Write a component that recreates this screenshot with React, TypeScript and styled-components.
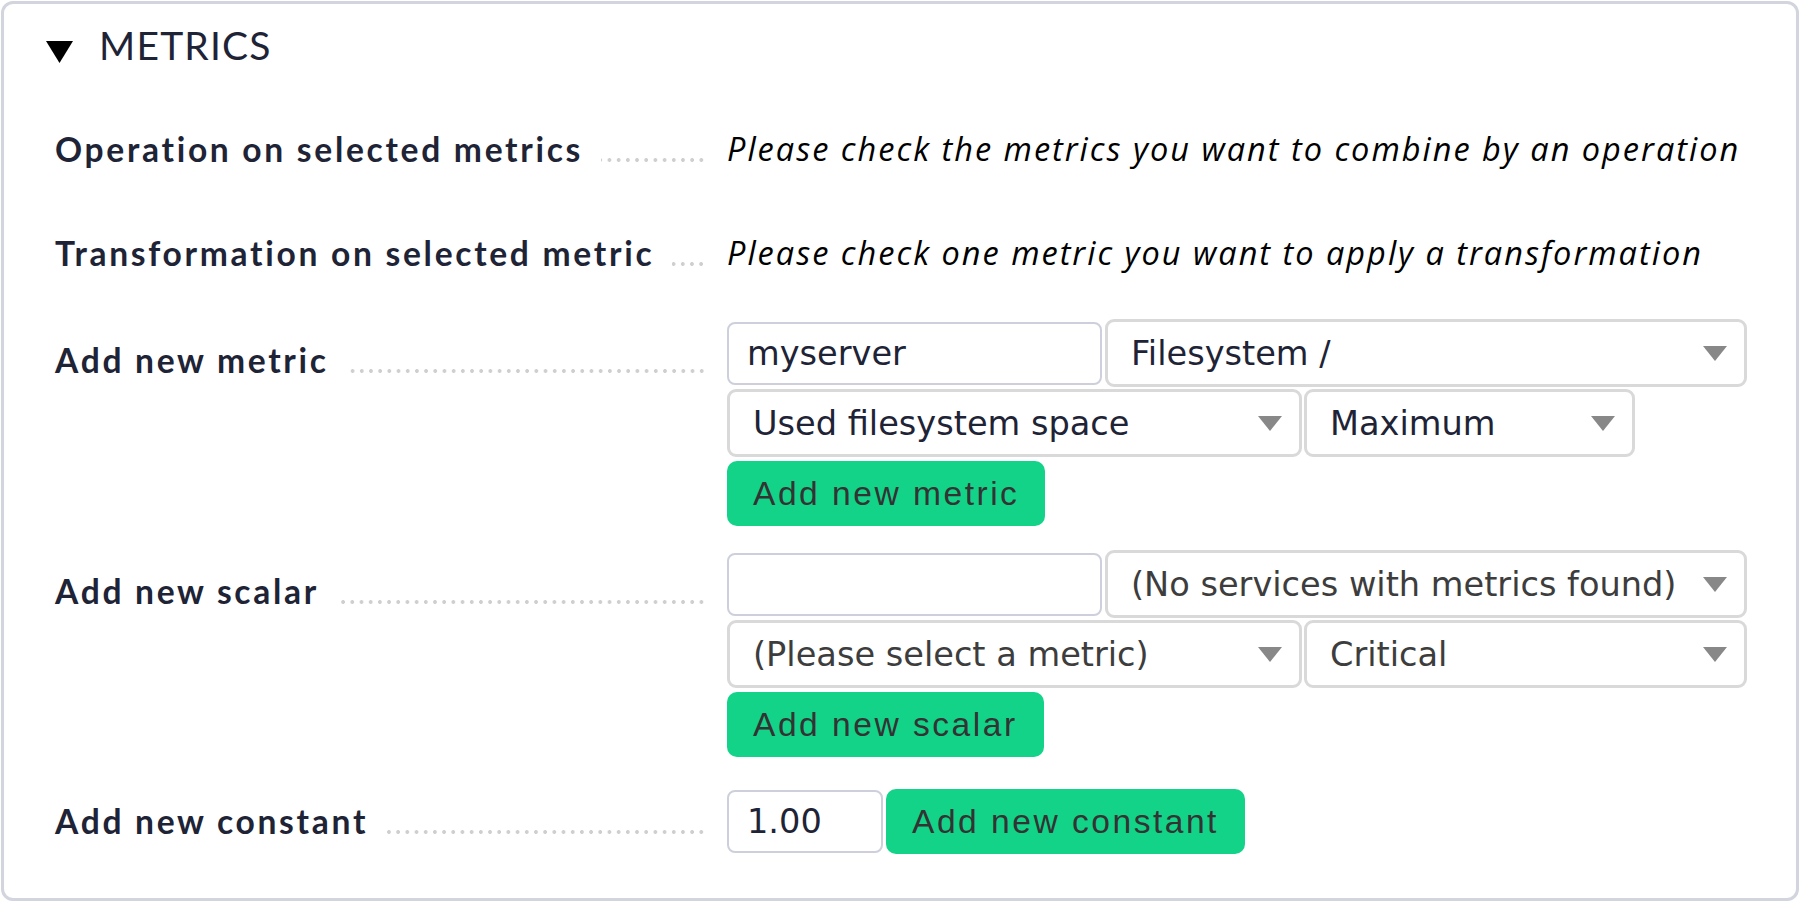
import React from 'react';
import styled, { createGlobalStyle } from 'styled-components';

const GlobalStyle = createGlobalStyle`
  body {
    margin: 0;
    background: #fff;
    font-family: Lato, "Liberation Sans", sans-serif;
  }
`;

const Frame = styled.section`
  box-sizing: border-box;
  margin: 1px;
  height: 900px;
  border: 3px solid #d2d4de;
  border-radius: 12px;
  background: #fff;
`;

const Header = styled.div`
  display: flex;
  align-items: center;
  padding: 18px 0 0 42px;
`;

const Toggle = styled.svg`
  width: 27px;
  height: 22px;
  flex-shrink: 0;
  margin: 14px 26px 0 0;
`;

const Title = styled.h2`
  margin: 0;
  font: 400 39px/1.2 Lato, sans-serif;
  letter-spacing: 1.2px;
  color: #1e2436;
`;

const Body = styled.div`
  padding-left: 51px;
`;

const Row = styled.div<{ $gap: number }>`
  display: grid;
  grid-template-columns: 651px 1fr;
  column-gap: 21px;
  margin-top: ${(p) => p.$gap}px;
`;

const Label = styled.div<{ $pad?: number }>`
  display: flex;
  align-items: baseline;
  padding-top: ${(p) => p.$pad ?? 0}px;
  font: 700 33.6px/1.2 Lato, sans-serif;
  letter-spacing: 2.7px;
  color: #1e2436;
  white-space: nowrap;
`;

const Leader = styled.span`
  flex: 1;
  height: 4px;
  margin-left: 18px;
  background-image: radial-gradient(circle, #cfcfcf 1.6px, transparent 2.2px);
  background-size: 9.2px 4px;
  background-repeat: repeat-x;
  background-position: right center;
`;

const Hint = styled.div`
  padding-top: 1px;
  font: italic 400 32.5px/38px "Open Sans", sans-serif;
  letter-spacing: 2px;
  color: #000;
  white-space: nowrap;
`;

const Stack = styled.div`
  display: flex;
  flex-direction: column;
  align-items: flex-start;
  gap: 2px;
`;

const Line = styled.div`
  display: flex;
  align-items: center;
  gap: 2px;
`;

const TextInput = styled.input<{ $width: number }>`
  box-sizing: border-box;
  width: ${(p) => p.$width}px;
  height: 63px;
  margin-right: 1px;
  padding: 0 18px;
  border: 2px solid #cdd0dc;
  border-radius: 8px;
  outline: none;
  background: #fff;
  font: 400 33.6px "DejaVu Sans", sans-serif;
  color: #1e2436;
`;

const Select = styled.div<{ $width: number; $muted?: boolean }>`
  box-sizing: border-box;
  width: ${(p) => p.$width}px;
  height: 68px;
  display: flex;
  align-items: center;
  justify-content: space-between;
  padding: 0 17px 0 23px;
  border: 3px solid #d9d9d9;
  border-radius: 9px;
  background: #fff;
  font: 400 33.6px "DejaVu Sans", sans-serif;
  color: ${(p) => (p.$muted ? '#3d3d3d' : '#1e2436')};
  white-space: nowrap;
`;

const Caret = styled.svg`
  width: 24px;
  height: 15px;
  flex-shrink: 0;
  margin-left: 10px;
`;

const Button = styled.button<{ $lift?: number }>`
  box-sizing: border-box;
  height: 65px;
  margin-top: ${(p) => p.$lift ?? 0}px;
  padding: 0 26px;
  border: none;
  border-radius: 10px;
  background: #13d389;
  font: 400 33.6px "Liberation Sans", Arial, sans-serif;
  letter-spacing: 2.5px;
  color: #333;
  cursor: pointer;
`;

const Dropdown = ({ value, width, muted }: { value: string; width: number; muted?: boolean }) => (
  <Select $width={width} $muted={muted}>
    <span>{value}</span>
    <Caret viewBox="0 0 24 15">
      <polygon points="0,0 24,0 12,15" fill="#888" />
    </Caret>
  </Select>
);

const App = () => {
  return (
    <>
      <GlobalStyle />
      <Frame>
        <Header>
          <Toggle viewBox="0 0 27 22">
            <polygon points="0,0 27,0 13.5,22" fill="#000" />
          </Toggle>
          <Title>METRICS</Title>
        </Header>
        <Body>
          <Row $gap={60}>
            <Label>
              Operation on selected metrics
              <Leader />
            </Label>
            <Hint>Please check the metrics you want to combine by an operation</Hint>
          </Row>
          <Row $gap={64}>
            <Label>
              Transformation on selected metric
              <Leader />
            </Label>
            <Hint>Please check one metric you want to apply a transformation</Hint>
          </Row>
          <Row $gap={46}>
            <Label $pad={21}>
              Add new metric
              <Leader />
            </Label>
            <Stack>
              <Line>
                <TextInput $width={375} defaultValue="myserver" />
                <Dropdown value="Filesystem /" width={642} />
              </Line>
              <Line>
                <Dropdown value="Used filesystem space" width={575} />
                <Dropdown value="Maximum" width={331} />
              </Line>
              <Button $lift={2}>Add new metric</Button>
            </Stack>
          </Row>
          <Row $gap={24}>
            <Label $pad={21}>
              Add new scalar
              <Leader />
            </Label>
            <Stack>
              <Line>
                <TextInput $width={375} defaultValue="" />
                <Dropdown value="(No services with metrics found)" width={642} muted />
              </Line>
              <Line>
                <Dropdown value="(Please select a metric)" width={575} muted />
                <Dropdown value="Critical" width={443} muted />
              </Line>
              <Button $lift={2}>Add new scalar</Button>
            </Stack>
          </Row>
          <Row $gap={32}>
            <Label $pad={12}>
              Add new constant
              <Leader />
            </Label>
            <Line>
              <TextInput $width={156} defaultValue="1.00" />
              <Button>Add new constant</Button>
            </Line>
          </Row>
        </Body>
      </Frame>
    </>
  );
};

export default App;
